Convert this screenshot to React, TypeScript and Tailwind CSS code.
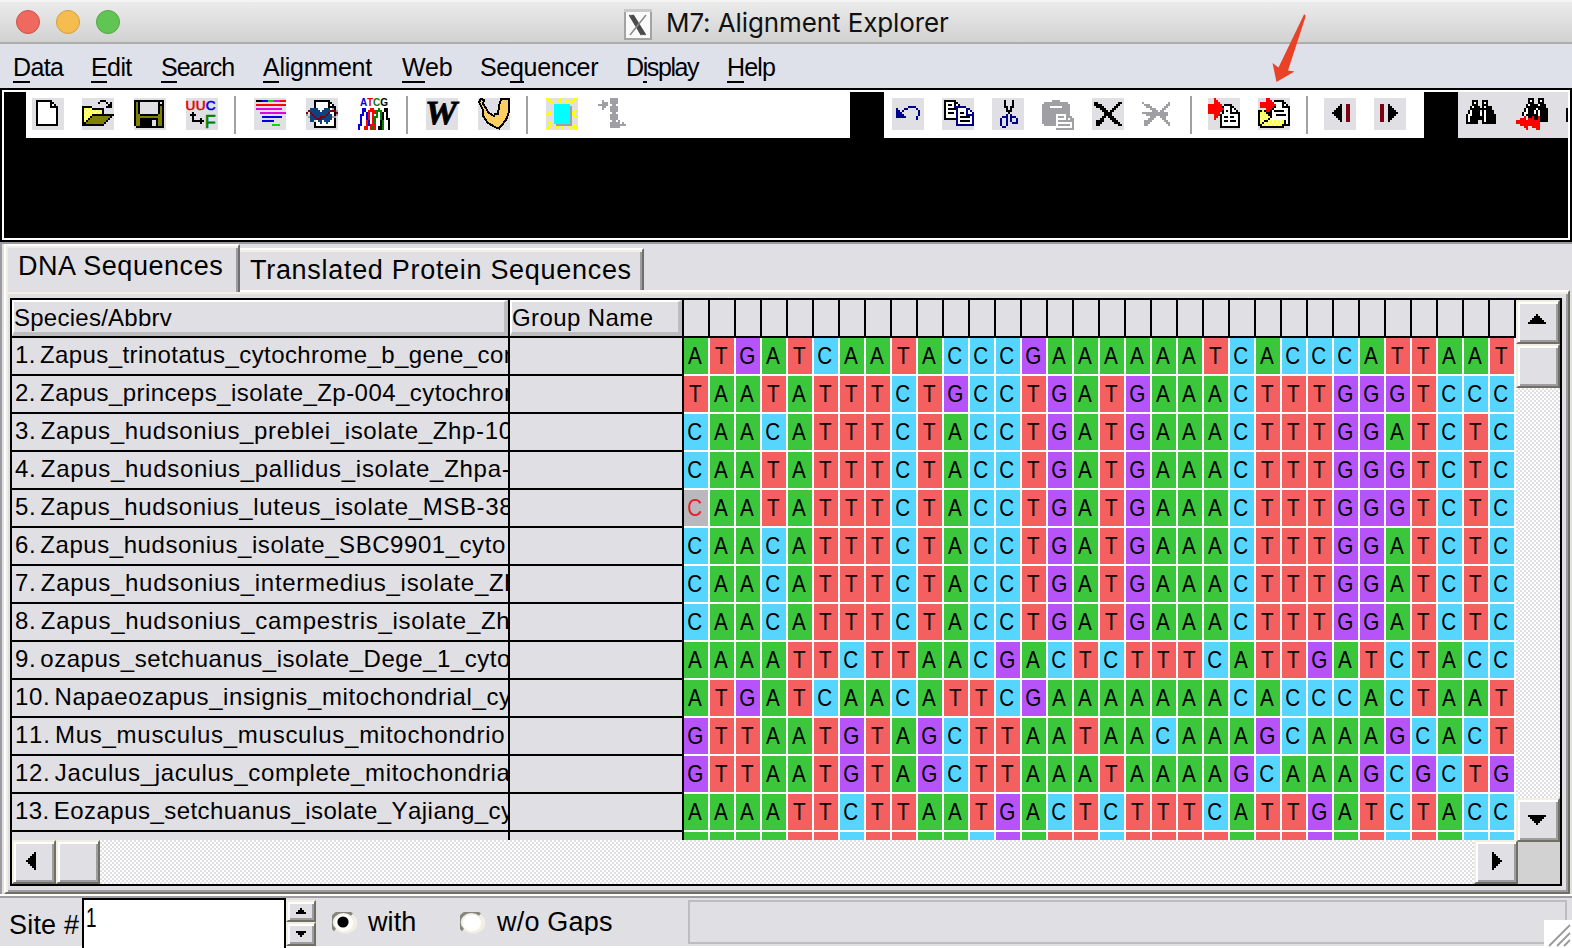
import React from "react";

const COLORS: Record<string, string> = {
  K: "#000000", W: "#ffffff", Y: "#ffff33", P: "#ffffaa", O: "#808000", R: "#ff0000", B: "#0000e0",
  N: "#000084", G: "#a0a0a4", L: "#00e000", M: "#e000e0", D: "#7b0010", S: "#10427b", C: "#00ffff",
  V: "#008000", F: "#ffff00", A: "#a6caf0",
};

function Pixels({ rows, bg = true, cls = "", children }: { rows: string[]; bg?: boolean; cls?: string; children?: React.ReactNode }) {
  const rects: React.ReactNode[] = [];
  rows.forEach((row, y) => {
    let x = 0;
    while (x < row.length) {
      const c = row[x];
      let e = x + 1;
      while (e < row.length && row[e] === c) e++;
      if (COLORS[c]) rects.push(<rect key={`${x}-${y}`} x={x} y={y} width={e - x} height={1} fill={COLORS[c]} />);
      x = e;
    }
  });
  return (
    <svg viewBox="0 0 16 16" shapeRendering="crispEdges" className={`h-8 w-8 shrink-0 overflow-visible ${bg ? "bg-[#e0dfe3]" : ""} ${cls}`}>
      {rects}
      {children}
    </svg>
  );
}

const NEW = [
  "", "..KKKKKKKK", "..KWWWWWWKK", "..KWWWWWWKWK", "..KWWWWWWKKKK", "..KWWWWWWWWWK",
  "..KWWWWWWWWWK", "..KWWWWWWWWWK", "..KWWWWWWWWWK", "..KWWWWWWWWWK", "..KWWWWWWWWWK", "..KWWWWWWWWWK", "..KWWWWWWWWWK", "..KKKKKKKKKKK",
];
const OPEN = [
  "", ".........KKK", "........K...K.K", ".............KK", "KKKKK.......KKK", "KYPYPKKKKKK", "KPYPYPYPYPK", "KYPYPYPYPYK",
  "KPYPYKKKKKKKKKKK", "KYPYKOOOOOOOOOK", "KPYKOOOOOOOOOK", "KYKOOOOOOOOOK", "KKOOOOOOOOOK", "KKKKKKKKKKK",
];
const SAVE = [
  "", "KKKKKKKKKKKKKKK", "KOK.........K.K", "KOK.........KKK", "KOK.........KOK", "KOK.........KOK", "KOK.........KOK", "KOK.........KOK",
  "KOOKKKKKKKKKOOK", "KOOOOOOOOOOOOOK", "KOOKKKKKKKKKOOK", "KOOKKKKKK..KOOK", "KOOKKKKKK..KOOK", "KOOKKKKKK..KOOK", ".KKKKKKKKKKKKKK",
];
const TRANSLATE = ["", "", "", "", "", "", "", "...K", "..KKK", "...K", "...K...K", "...KKKKKK", ".......K"];
const ALIGN = [
  "", ".KKKBBBLLLMMMRRR", "", ".RRRRRRRRRRRRRRR", "", ".MMMMMMMMMMMMM", "", "...MMMMMMMMMMMMM", "", "....BBBBBBBBBB", "",
  "....BBBBBB", "", ".........LLLL",
];
const EDITSEQ = [
  "", "....KKKKKKKK", "....KWWWWWWKK", "....KWWWWWWKWK", "....KWWWWWWKKKK", "..SSSSWWWSSSWGK", ".DSSSSSWSSSSDDDG", "D.DSSSSSSSSDWWKD",
  "G.SDSSSSSSDSSWKG", ".GSSDSSDDDSSSGG", "..SSSDDDSSSSSWK", "..SS.WSSWSSSWWK", "....KWWSWWSWWWK", "....KWWWWWWWWWK", "....KKKKKKKKKKK",
];
const TRACE = [
  "", "", "", "", "", "..BB..RR..V..KK", "..BB.RRRRVVV.KK", "..B.BR.RRV.VK.K", ".BB.BR.R.V.VK.K", ".B..BR.RVV.VK.K", ".B..BR.RV..VK.KK",
  ".B..RB.RV..KV..K", ".B..RB.RV..KV..K", "BB..RBRRR..KV..K", "B..RR.RVR.KKV..K", "B..RR.RVR.KKV..K",
];
const MARK = [
  "FF.....F......FF", ".FF...FF..FF.FF", "..FF...F..F.FF", "....CCCCCCCC", "....CCCCCCCCG", "....CCCCCCCCG", "....CCCCCCCCG.FF", ".FF.CCCCCCCCGFF",
  "FFF.CCCCCCCCGFF", "....CCCCCCCCG.FF", "....CCCCCCCCG", "....CCCCCCCCG", ".FF.CCCCCCCCG", "..F..GGGGGGGG.F", ".FF..FF.F..F.FFF", "FF...F..F...F.FF",
];
const GAPS = [
  "......GGGG", "..G...GGGG", "..GGG.GGGG", "GGGGG..GG", "..GG..GGGG", "..G...GGGG", "......GGGG", ".......GG", "......GGGG", "......GGGG",
  "......GGGG", ".......GG.G", "......GGGGG.G", "......GGGGGGGG", "......GGGGG",
];
const UNDO = [
  "", "", "", "", "........NNNN", "..N...NN....N", "..NN.N.......N", "..NNN........N", "..NNNN.......N", "..NNNNN.....N", "............N",
];
const COPY = [
  "", ".KKKKKK", ".KWWWWKK", ".KWKKWKWK", ".KWWWWNNNNNN", ".KWKKKKNWWWWNN", ".KWWWWWNWWWWNWN", ".KWKKKWNWKKWNWWN", ".KWWWWWNWWWWNNNN",
  ".KWWWWWNWKKKKKWN", ".KKKKKKNWWWWWWWN", ".......NWKKKKKWN", ".......NWWWWWWWN", ".......NNNNNNNNN",
];
const CUT = [
  "", "......K...K", "......K...K", "......K...K", "......KK.KK", ".......K.K", ".......KKK", "........K", ".......N.N", ".....NNN.NNN", "....N..N.N..N",
  "....N..N.N..N", "....N..N..NNN", "....N..N", ".....NN",
];
const PASTE = [
  "", ".....GGGG", ".GGGGGGGGGGGG", "GGGGGGGGGGGGGG", "GGGGWWWWWWGGGG", "GGGGGGGGGGGGGG", "GGGGGGGGGGGGGG", "GGGGGGGGGGGGGG", "GGGGGGGWWWWWGG",
  "GGGGGGGWGGGWGGG", "GGGGGGGWWWWWGWGG", "GGGGGGGWGGGGGGGG", "GGGGGGGWWWWWWWWG", ".GGGGGGWGGGGGGWG", ".......WWWWWWWWG", ".......GGGGGGGGG",
];
const DEL = [
  "", "", ".KK..........KK", ".KKKK.......KK", "..KKKK.....KK", "....KKK...KK", ".....KKK.KK", "......KKKK", "......KKKK", ".....KK.KKK", "....KK...KKK", "..KKKK....KKK",
  "..KKK......KKK", "..KK.........KK",
];
const DELGAP = [
  "", "", "G............G", ".GGG........GG", "..GGG......GG", "....GGG...GG", ".....GGG.GG", "GGGGGGGGGGGGG", "..GGGGGGGGGGG", "....GGG..GGG", "...GGG....GG",
  ".GGGG......GG", ".GGG........GG", ".GG..........G",
];
const IMPORT = [
  "...R", "...RR", "...RRR", "RRRRRRR.KKKK", "RRRRRRRKWWWKK", "RRRRRRRRWWWKWK", "RRRRRRRKWKWKWWK", "RRRRRR.KWWWKKKKK", "...RRRKWWWWWWWWK", "...RR.KWKKWKKWWK",
  "...R..KWWWWWWWWK", "......KWKKWKKKWK", "......KWWWWWWWWK", "......KWWWWWWWWK", "......KKKKKKKKKK",
];
const IMPORT_DIR = [
  "....RR", "....RRR.KKKKK", ".RRRRRRRWWWWKK", ".RRRRRRRRWWWKWK", ".RRRRRRRKWWWKKKK", "....RRRKWWWWWWWK", "KKYKRRKWKKKKKWWK", "KYPYKKKWWWWWWWWK", "KPYPYKKWWKKKKKWK",
  "KYPYPYKWWWWWWWWK", "KPYPYKWWWWWWWWWK", "KYPKKPYPYPYPYKWK", "KYKPYPYPYPYPYKWK", "KKPYPYPYPYPYKKKK", ".KKKKKKKKKKKK",
];
const PREV = ["", "", "", "........K..DD", ".......KK..DD", "......KKK..DD", ".....KKKK..DD", "....KKKKK..DD", ".....KKKK..DD", "......KKK..DD", ".......KK..DD", "........K..DD"];
const NEXT = ["", "", "", "...DD..K", "...DD..KK", "...DD..KKK", "...DD..KKKK", "...DD..KKKKK", "...DD..KKKK", "...DD..KKK", "...DD..KK", "...DD..K"];
const FIND = [
  "", "....KKK..KKK", "....KWK..KWK", "....KKK..KKK", "...KWKKK.KWKKK", "...KKKKKKKKKKK", "..KWKKKK.KWKKKK", "..KWKKKKWKWKKKK", ".KWWKKKKWKWKKKKK", ".KWKKKKKKKWKKKKK",
  ".KWKKKKKKKWKKKKK", ".KWKKKK..KWKKKKK", ".KKKKKK..KKKKKKK",
];
const FINDPREV = [
  "......KKK..KKK", "......KWK..KWK", "......KKK..KKK", ".....KWKKKKWKKK", ".....KKKKKKKKKK", "....KWKKKKWKKKKK", "....KWKKKWKWKKKK", "...KWWKKKWKWKKKK",
  "...KWKKKKKKWKKKK", "....R.KKRKKRKKKK", "..RRR.RRRKKRKKKK", "RRRRRRRRRRRRKKKK", "RRRRRRRRRRRR", "..RRRRRRRRRR", "....RR..RRRR", ".....R....RR",
];

const Sep = ({ cls }: { cls: string }) => <div className={`-mt-0.5 h-[38px] w-0.5 shrink-0 bg-[#a0a0a4] ${cls}`} />;

function ToolBar() {
  return (
    <div className="flex h-[154px] w-full shrink-0 flex-col border-2 border-black bg-black">
      <div className="flex grow items-start border-2 border-white bg-black">
        <div className="ml-[22px] -mt-0.5 flex h-12 w-[824px] shrink-0 items-start bg-white pt-2 pl-1.5">
          <Pixels rows={NEW} />
          <Pixels rows={OPEN} cls="ml-[18px]" />
          <Pixels rows={SAVE} cls="ml-5" />
          <Pixels rows={TRANSLATE} cls="ml-5">
            <text x="-0.2" y="6" fontSize="6.8" fontWeight="400" stroke="#e00000" strokeWidth="0.3" textLength="15" className="font-['Liberation_Sans']" fill="#e00000">UU<tspan fill="#0000e0" stroke="#0000e0">C</tspan></text>
            <text x="9.4" y="15" fontSize="9" fontWeight="400" stroke="#008000" strokeWidth="0.3" className="font-['Liberation_Sans']" fill="#008000">F</text>
          </Pixels>
          <Sep cls="ml-4" />
          <Pixels rows={ALIGN} cls="ml-[18px]" />
          <Pixels rows={EDITSEQ} cls="ml-5" />
          <Pixels rows={TRACE} bg={false} cls="ml-5">
            <text x="1" y="4.2" fontSize="5" fontWeight="700" className="font-['Liberation_Sans']" textLength="14" fill="#0000e0">A<tspan fill="#e00000">T</tspan><tspan fill="#008000">C</tspan><tspan fill="#000">G</tspan></text>
          </Pixels>
          <Sep cls="ml-4" />
          <Pixels rows={[]} cls="ml-[18px]">
            <text x="-0.5" y="13" fontSize="16.5" fontWeight="700" fontStyle="italic" textLength="16" lengthAdjust="spacingAndGlyphs" stroke="#000" strokeWidth="0.4" className="font-['Liberation_Serif']">W</text>
          </Pixels>
          <Pixels rows={[]} cls="ml-5">
            <path d="M.5 2 L1.5 .5 L3 1 L2.5 3 L4 5 L5 7 L7 8.500 L8 9 L8.500 8 L10 8 L10.500 4 L11.500 .5 L15.500 .5 L15.500 7 L14 11 L10.500 15.300 L8.500 14.500 L5 12.500 L2.500 9 L2.500 6 Z" fill="#ffce63" stroke="#000" strokeWidth="1" />
          </Pixels>
          <Sep cls="ml-4" />
          <Pixels rows={MARK} cls="ml-[18px]" />
          <Pixels rows={GAPS} bg={false} cls="ml-5" />
        </div>
        <div className="ml-[34px] -mt-0.5 flex h-12 w-[540px] shrink-0 items-start bg-white pt-2 pl-2">
          <Pixels rows={UNDO} />
          <Pixels rows={COPY} cls="ml-[18px]" />
          <Pixels rows={CUT} cls="ml-[18px]" />
          <Pixels rows={PASTE} bg={false} cls="ml-[18px]" />
          <Pixels rows={DEL} cls="ml-[18px]" />
          <Pixels rows={DELGAP} bg={false} cls="ml-[18px]" />
          <Sep cls="ml-4" />
          <Pixels rows={IMPORT} cls="ml-4" />
          <Pixels rows={IMPORT_DIR} cls="ml-[18px]" />
          <Sep cls="ml-4" />
          <Pixels rows={PREV} cls="ml-4" />
          <Pixels rows={NEXT} cls="ml-[18px]" />
        </div>
        <div className="ml-[34px] flex h-[46px] min-w-0 grow items-start overflow-hidden bg-[#e0dfe3] pt-1.5 pl-1.5">
          <Pixels rows={FIND} />
          <Pixels rows={FINDPREV} cls="ml-5" />
          <div className="mt-2.5 ml-[18px] h-[14px] w-0.5 shrink-0 bg-black" />
        </div>
      </div>
    </div>
  );
}

const SPECIES: [string, string, string, string][] = [
  ["1.", "Zapus_trinotatus_cytochrome_b_gene_complete", "ATGATCAATACCCGAAAAAATCACCCATTAAT", "tracking-[0.42px]"],
  ["2.", "Zapus_princeps_isolate_Zp-004_cytochrome", "TAATATTTCTGCCTGATGAAACTTTGGGTCCC", "tracking-[0.45px]"],
  ["3.", "Zapus_hudsonius_preblei_isolate_Zhp-10", "CAACATTTCTACCTGATGAAACTTTGGATCTC", "tracking-[0.66px]"],
  ["4.", "Zapus_hudsonius_pallidus_isolate_Zhpa-", "CAATATTTCTACCTGATGAAACTTTGGGTCTC", "tracking-[0.7px]"],
  ["5.", "Zapus_hudsonius_luteus_isolate_MSB-38", "CAATATTTCTACCTGATGAAACTTTGGGTCTC", "tracking-[0.62px]"],
  ["6.", "Zapus_hudsonius_isolate_SBC9901_cyto", "CAACATTTCTACCTGATGAAACTTTGGATCTC", "tracking-[0.55px]"],
  ["7.", "Zapus_hudsonius_intermedius_isolate_Zh", "CAACATTTCTACCTGATGAAACTTTGGATCTC", "tracking-[0.7px]"],
  ["8.", "Zapus_hudsonius_campestris_isolate_Zh", "CAACATTTCTACCTGATGAAACTTTGGATCTC", "tracking-[0.72px]"],
  ["9.", "ozapus_setchuanus_isolate_Dege_1_cyto", "AAAATTCTTAACGACTCTTTCATTGATCTACC", "tracking-[0.53px]"],
  ["10.", "Napaeozapus_insignis_mitochondrial_cy", "ATGATCAACATTCGAAAAAAACACCCACTAAT", "tracking-[0.6px]"],
  ["11.", "Mus_musculus_musculus_mitochondrio", "GTTAATGTAGCTTAATAACAAAGCAAAGCACT", "tracking-[0.73px]"],
  ["12.", "Jaculus_jaculus_complete_mitochondria", "GTTAATGTAGCTTAAATAAAAGCAAAGCGCTG", "tracking-[0.67px]"],
  ["13.", "Eozapus_setchuanus_isolate_Yajiang_cy", "AAAATTCTTAATGACTCTTTCATTGATCTACC", "tracking-[0.45px]"],
];
const LAST = "AAAATTCTTAACGATTCTTTTATTGATCTACC";
const BASE: Record<string, string> = { A: "bg-[#3cc63c]", T: "bg-[#f46060]", G: "bg-[#b653f9]", C: "bg-[#56d6ff]" };

const BTN = "flex shrink-0 items-center justify-center border-2 border-t-[#f1efe2] border-l-[#f1efe2] border-r-[#716f64] border-b-[#716f64] bg-[#e0dfe3] shadow-[inset_2px_2px_0_#fff,inset_-2px_-2px_0_#9d9da1]";
const DITHER = "bg-[repeating-conic-gradient(#dfdee2_0_25%,#ffffff_0_50%)] bg-[length:4px_4px]";

const Arrow = ({ dir, small }: { dir: "up" | "down" | "left" | "right"; small?: boolean }) => (
  <svg
    viewBox="0 0 9 5"
    shapeRendering="crispEdges"
    className={`shrink-0 ${small ? "h-[6px] w-[10px]" : "h-[10px] w-[18px]"} ${dir === "down" ? "rotate-180" : dir === "left" ? "-rotate-90" : dir === "right" ? "rotate-90" : ""}`}
  >
    {small ? <path d="M3.6 0h1.8v1.66h1.8v1.66h1.8V5H0V3.32h1.8V1.66h1.8z" /> : <path d="M4 0h1v1h1v1h1v1h1v1h1v1H0V4h1V3h1V2h1V1h1z" />}
  </svg>
);

function Grid() {
  return (
    <div className="flex h-[588px] w-[1552px] flex-col border-2 border-black bg-[#e0dfe3]">
      <div className="flex h-[540px]">
        <div className="flex w-[672px] shrink-0 flex-col overflow-hidden">
          <div className="flex h-[38px] shrink-0 border-b-2 border-black text-2xl leading-[31px]">
            <div className="w-[496px] border-t-2 border-b-4 border-l-2 border-t-white border-l-white border-r-[4px] border-r-[#bdbdbf] border-b-[#bdbdbf]">
              <span className="tracking-[0.25px]">Species/Abbrv</span>
            </div>
            <div className="w-0.5 bg-black" />
            <div className="w-[172px] border-t-2 border-b-4 border-l-2 border-t-white border-l-white border-r-[4px] border-r-[#bdbdbf] border-b-[#bdbdbf]">
              <span className="tracking-[0.4px]">Group Name</span>
            </div>
            <div className="w-0.5 bg-black" />
          </div>
          {SPECIES.map(([no, name, , track]) => (
            <div key={no} className="flex h-[38px] shrink-0 border-b-2 border-black">
              <div className={`w-[496px] overflow-hidden pl-[3px] text-2xl leading-[34px] whitespace-nowrap [font-kerning:none] ${track}`}>
                <span className="-mr-[3px]">{no} </span>
                {name}
              </div>
              <div className="w-0.5 shrink-0 bg-black" />
              <div className="w-[172px]" />
              <div className="w-0.5 shrink-0 bg-black" />
            </div>
          ))}
          <div className="flex h-2 shrink-0">
            <div className="ml-[496px] w-0.5 bg-black" />
            <div className="ml-[172px] w-0.5 bg-black" />
          </div>
        </div>
        <div className="flex w-[832px] shrink-0 flex-col overflow-hidden bg-white">
          <div className="flex h-[38px] shrink-0 border-b-2 border-black bg-[#e0dfe3]">
            {LAST.split("").map((_, i) => <div key={i} className="w-[26px] border-r-2 border-black" />)}
          </div>
          {SPECIES.map(([no, , seq], r) => (
            <div key={no} className="flex h-[38px] shrink-0 gap-0.5 pb-0.5">
              {seq.split("").map((b, i) => (
                <div
                  key={i}
                  className={`w-6 pr-0.5 text-center text-2xl leading-[35px] ${r === 4 && i === 0 ? "bg-[#b9b8bc] text-[#e8202c]" : BASE[b]}`}
                >
                  <span className="inline-block origin-center scale-x-[0.86]">{b}</span>
                </div>
              ))}
            </div>
          ))}
          <div className="flex h-2 shrink-0 gap-0.5">
            {LAST.split("").map((b, i) => <div key={i} className={`w-6 ${BASE[b]}`} />)}
          </div>
        </div>
        <div className={`flex w-11 shrink-0 flex-col ${DITHER}`}>
          <div className={`${BTN} h-11 pr-0.5 pb-1.5`}><Arrow dir="up" /></div>
          <div className={`${BTN} h-11`} />
          <div className={`${BTN} z-10 mt-auto -mb-0.5 h-11 pr-0.5`}><Arrow dir="down" /></div>
        </div>
      </div>
      <div className={`flex h-11 ${DITHER}`}>
        <div className={`${BTN} w-11 pr-1.5 pb-0.5`}><Arrow dir="left" /></div>
        <div className={`${BTN} w-11`} />
        <div className={`${BTN} ml-auto w-11 pb-0.5 pl-0.5`}><Arrow dir="right" /></div>
        <div className="w-[42px] bg-[#d2d2d2]" />
      </div>
    </div>
  );
}

const U = ({ children }: { children: string }) => <span className="border-b-2 border-black">{children}</span>;

function MenuBar() {
  const item = "shrink-0 whitespace-nowrap leading-[24px] h-6";
  return (
    <div className="flex h-11 w-full shrink-0 bg-[#dfe1ea] pt-[11px] text-[25px]">
      <div className={`${item} ml-[13px] w-[78px] tracking-[-0.6px]`}><U>D</U>ata</div>
      <div className={`${item} w-[70px] tracking-[-0.6px]`}><U>E</U>dit</div>
      <div className={`${item} w-[102px] tracking-[-1px]`}><U>S</U>earch</div>
      <div className={`${item} w-[139px] tracking-[-0.25px]`}><U>A</U>lignment</div>
      <div className={`${item} w-[78px] tracking-[-0.2px]`}><U>W</U>eb</div>
      <div className={`${item} w-[146px] tracking-[-0.3px]`}>Se<U>q</U>uencer</div>
      <div className={`${item} w-[101px] tracking-[-1.4px]`}>D<U>i</U>splay</div>
      <div className={`${item} tracking-[-0.8px]`}><U>H</U>elp</div>
    </div>
  );
}

const Radio = ({ on }: { on?: boolean }) => (
  <svg viewBox="0 0 26 22" className="h-[22px] w-[26px] shrink-0">
    <ellipse cx="13" cy="11" rx="12.5" ry="10.5" fill="#f1efe2" />
    <path d="M3 18 A12 10.5 0 0 1 20 2.5" fill="none" stroke="#858580" strokeWidth="3" />
    <ellipse cx="12" cy="11" rx="9" ry="8.5" fill="#fff" />
    {on && <circle cx="11" cy="10" r="5.6" fill="#000" />}
  </svg>
);

export default function App() {
  return (
    <div className="relative flex h-[948px] w-[1572px] flex-col overflow-hidden bg-[#e0dfe3] font-['Liberation_Sans',sans-serif] text-black">
      <header className="flex h-11 shrink-0 items-center border-t-2 border-b-2 border-t-[#f4f4f4] border-b-[#adadad] bg-linear-to-b from-[#ebebeb] to-[#d2d2d2]">
        <div className="flex w-[624px] gap-4 pl-4">
          <div className="h-6 w-6 rounded-full border-[1.5px] border-[#d2504a] bg-[#ee6a5f]" />
          <div className="h-6 w-6 rounded-full border-[1.5px] border-[#d69e3d] bg-[#f5bd4f]" />
          <div className="h-6 w-6 rounded-full border-[1.5px] border-[#52a544] bg-[#61c554]" />
        </div>
        <svg viewBox="0 0 28 31" className="mt-1 h-[31px] w-7">
          <rect x="1" y="1" width="26" height="29" fill="#fafafa" stroke="#a3a3a3" strokeWidth="2" />
          <rect x="0" y="0" width="28" height="3" fill="#c9c9c9" />
          <path d="M5.500 6L17.500 26M7.500 6L19.500 26M9 6L21.500 26" stroke="#4a4a4a" strokeWidth="1.600" />
          <path d="M22 6L6 26" stroke="#888" strokeWidth="1.500" />
        </svg>
        <div className="mt-0.5 ml-[14px] font-['Inter'] text-[26px] leading-8 tracking-[-0.1px] whitespace-nowrap text-[#111]">M7: Alignment Explorer</div>
      </header>
      <MenuBar />
      <ToolBar />
      <div className="h-0.5 shrink-0 bg-[#9b9a9f]" />
      <main className="flex h-[650px] shrink-0 flex-col border-l-2 border-[#9b9a9f]">
        <div className="z-10 -mb-0.5 flex h-[48px] shrink-0 items-start pl-0.5 text-[27px]">
          <div className="h-[48px] w-[236px] border-t-2 border-l-2 border-r-2 border-t-white border-l-white border-r-[#6f6e72] bg-[#e0dfe3] pl-3 leading-[41px] tracking-[0.55px] whitespace-nowrap shadow-[inset_2px_2px_0_#f1efe2,inset_-2px_0_0_#9d9da1]">DNA Sequences</div>
          <div className="mt-1 h-[42px] w-[404px] border-t-2 border-r-2 border-t-white border-r-[#716f64] pl-2.5 leading-[41px] tracking-[0.7px] whitespace-nowrap shadow-[inset_0_2px_0_#f1efe2,inset_-2px_0_0_#9d9da1]">Translated Protein Sequences</div>
        </div>
        <div className="ml-0.5 h-[604px] w-[1566px] border-2 border-t-white border-l-white border-r-[#716f64] border-b-[#716f64] pt-1.5 pl-1 shadow-[inset_2px_2px_0_#f1efe2,inset_-2px_-2px_0_#9d9da1]">
          <Grid />
        </div>
      </main>
      <footer className="flex h-[54px] shrink-0 flex-col border-t-2 border-white">
        <div className="flex h-[50px] shrink-0 border-t-2 border-[#9d9da1] text-[27px]">
          <div className="w-[82px] pt-1.5 pl-[9px] leading-[42px] tracking-[0.2px] whitespace-nowrap">Site #</div>
          <div className="z-10 -mb-0.5 h-[50px] w-[204px] border-2 border-b-0 border-black bg-white pl-0.5 leading-[36px]"><span className="inline-block scale-x-[0.7] origin-left">1</span></div>
          <div className="flex w-[30px] flex-col pt-0.5">
            <div className={`${BTN} h-[22px]`}><Arrow dir="up" small /></div>
            <div className={`${BTN} h-6`}><Arrow dir="down" small /></div>
          </div>
          <div className="ml-4 flex h-[37px] items-start overflow-hidden leading-[49px]">
            <div className="pt-3.5"><Radio on /></div>
            <div className="ml-2.5 w-[92px] tracking-[0.1px]">with</div>
            <div className="pt-3.5"><Radio /></div>
            <div className="ml-[11px] tracking-[0.2px] whitespace-nowrap">w/o Gaps</div>
          </div>
          <div className="mt-0.5 mr-[5px] ml-auto h-11 w-[879px] border-2 border-[#bdbcc1]" />
        </div>
        <div className="h-0.5 bg-white" />
      </footer>
      <svg viewBox="0 0 28 28" className="absolute right-0 bottom-0 h-7 w-7 bg-white">
        <path d="M5 26L26 5M13 26L26 13M20 26L26 20" stroke="#9a9a9a" strokeWidth="1.800" />
      </svg>
      <svg viewBox="0 0 36 70" className="absolute top-[13px] left-[1271px] h-[70px] w-9">
        <path d="M33 1.500Q35 1 34.500 4L17 57.500L23.500 58.500L5.500 69L1.500 50L7.500 54.500Z" fill="#e94227" />
      </svg>
    </div>
  );
}
